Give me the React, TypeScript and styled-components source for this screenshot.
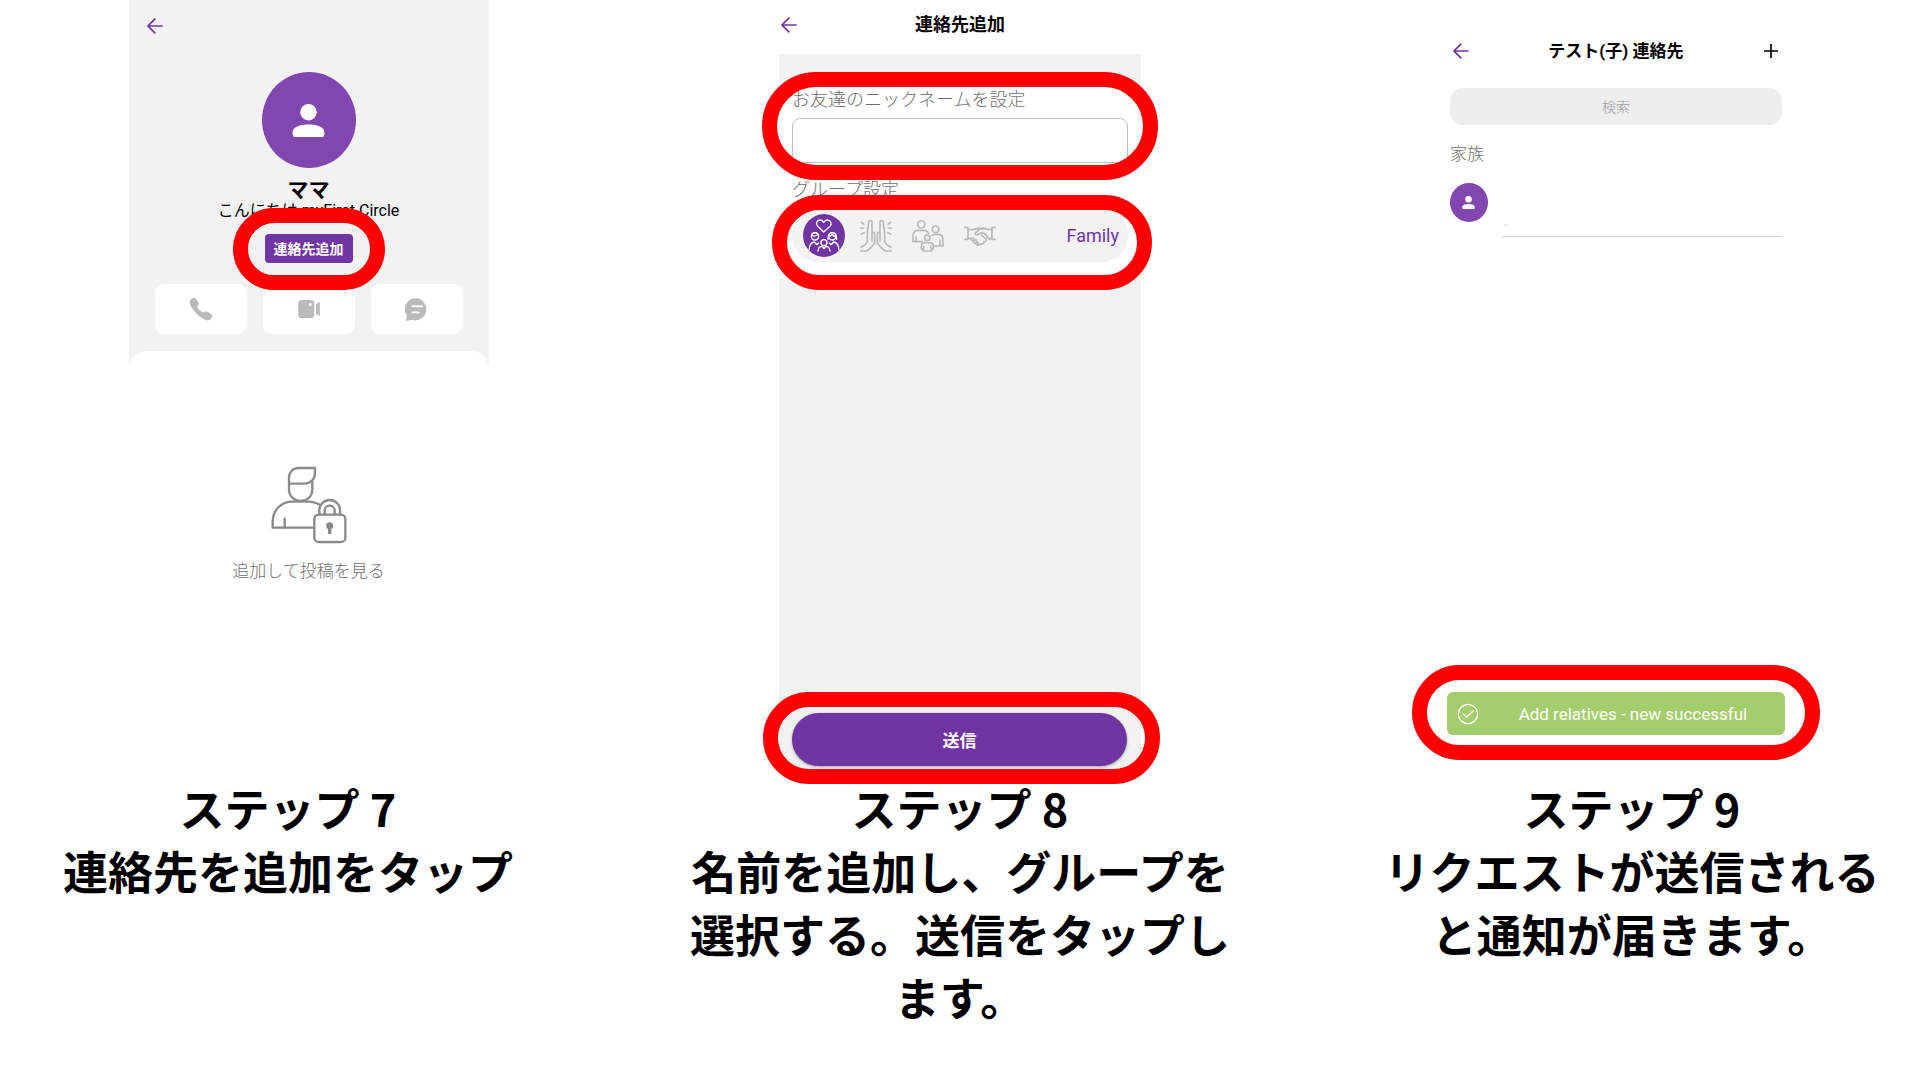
import React from 'react';
import styled, { createGlobalStyle } from 'styled-components';
import { IoCall } from 'react-icons/io5';

const purple = '#7035a3';
const avatarPurple = '#8247ae';
const panel = '#f2f2f2';
const muted = '#6e6e6e';
const iconGrey = '#bababa';

const GlobalStyle = createGlobalStyle`
  *, *::before, *::after { box-sizing: border-box; }
  body {
    margin: 0;
    background: #fff;
    color: #000;
    font-family: Roboto, 'Noto Sans CJK JP', sans-serif;
  }
  h1, h2, p { margin: 0; }
  button, input { font: inherit; }
  button { border: 0; padding: 0; background: none; cursor: pointer; }
  svg { display: block; }
`;

const Page = styled.main`
  min-height: 100vh;
  overflow-x: hidden;
`;

const ScreenRow = styled.div`
  display: grid;
  grid-template-columns: 9fr 10fr 9fr;
  justify-items: center;
  align-items: start;
`;

const Captions = styled.div`
  display: grid;
  grid-template-columns: 3fr 4fr 3fr;
  justify-items: center;
`;

const Caption = styled.section<{ $max: number }>`
  max-width: ${p => p.$max}px;
  font-family: 'Noto Sans CJK JP', sans-serif;
  font-size: 45px;
  line-height: 63px;
  font-weight: 700;
  text-align: center;
`;

const CaptionTitle = styled.h2`
  font-size: inherit;
  font-weight: inherit;
`;

const Ring = styled.span<{ $inset: string }>`
  position: absolute;
  inset: ${p => p.$inset};
  border: 15px solid #ff0000;
  border-radius: 54px;
  pointer-events: none;
  z-index: 2;
`;

const Marked = styled.div`
  position: relative;
`;

/* Profile screen */

const Profile = styled.section`
  width: 360px;
  min-height: 776px;
  display: flex;
  flex-direction: column;
`;

const ProfileTop = styled.div`
  display: flex;
  flex-direction: column;
  align-items: center;
  background: ${panel};
`;

const ProfileBar = styled.div`
  align-self: stretch;
  display: flex;
  align-items: flex-start;
  padding: 18px 18px 0;
  height: 72px;
`;

const Avatar = styled.div<{ $w: number; $h: number }>`
  display: flex;
  align-items: center;
  justify-content: center;
  width: ${p => p.$w}px;
  height: ${p => p.$h}px;
  border-radius: 50%;
  background: ${avatarPurple};
`;

const Name = styled.h1`
  margin-top: 10px;
  font-size: 21px;
  line-height: 24px;
  font-weight: 700;
`;

const Greeting = styled.p`
  font-size: 16px;
  line-height: 18px;
  font-weight: 400;
`;

const AddButton = styled.button`
  display: block;
  width: 88px;
  height: 29px;
  padding-top: 1px;
  border-radius: 4px;
  background: ${purple};
  color: #fff;
  font-size: 14px;
  line-height: 28px;
  font-weight: 700;
`;

const AddArea = styled(Marked)`
  margin-top: 14px;
`;

const Actions = styled.div`
  display: flex;
  gap: 16px;
  margin-top: 21px;
`;

const Action = styled.button`
  display: flex;
  align-items: center;
  justify-content: center;
  width: 92px;
  height: 50px;
  border-radius: 9px;
  background: #fff;
`;

const Sheet = styled.div`
  align-self: stretch;
  height: 22px;
  margin-top: 17px;
  border-radius: 18px 18px 0 0;
  background: #fff;
`;

const Locked = styled.div`
  display: flex;
  flex-direction: column;
  align-items: center;
  padding-top: 93px;
`;

const LockedText = styled.p`
  margin-top: 15px;
  color: ${muted};
  font-size: 17px;
  line-height: 24px;
  font-weight: 300;
`;

/* Add contact screen */

const AddContact = styled.section`
  width: 362px;
  min-height: 770px;
  display: flex;
  flex-direction: column;
`;

const TitleBar = styled.header<{ $h: number; $pad?: number }>`
  display: grid;
  grid-template-columns: 20px 1fr 20px;
  align-items: center;
  height: ${p => p.$h}px;
  padding: 0 ${p => p.$pad ?? 0}px;
`;

const ContactTitleBar = styled(TitleBar)`
  padding-bottom: 4px;
`;

const Title = styled.h1<{ $size: number }>`
  font-size: ${p => p.$size}px;
  line-height: 24px;
  font-weight: 700;
  text-align: center;
`;

const IconButton = styled.button`
  display: flex;
  align-items: center;
  justify-content: center;
  justify-self: center;
`;

const ContactBody = styled.form`
  flex: 1;
  display: flex;
  flex-direction: column;
  padding-top: 26px;
  background: ${panel};
`;

const Fields = styled.div`
  padding: 8px 13px 16px;
  background: #fff;
`;

const FieldLabel = styled.label`
  display: block;
  color: ${muted};
  font-size: 18px;
  line-height: 24px;
  font-weight: 300;
`;

const NameInput = styled.input`
  display: block;
  width: 100%;
  height: 45px;
  margin-top: 6px;
  padding: 0 12px;
  border: 1px solid #bfbfbf;
  border-radius: 8px;
  background: #fff;
  outline: none;
`;

const GroupLabel = styled.p`
  margin-top: 15px;
  color: ${muted};
  font-size: 18px;
  line-height: 24px;
  font-weight: 300;
`;

const GroupBar = styled.div`
  display: flex;
  align-items: center;
  height: 53px;
  margin-top: 7px;
  padding: 0 9px 0 6px;
  border-radius: 26px;
  background: ${panel};
`;

const GroupOption = styled.label`
  display: flex;
  justify-content: center;
  width: 52px;
  cursor: pointer;
`;

const HiddenRadio = styled.input`
  appearance: none;
  width: 0;
  height: 0;
  margin: 0;
`;

const GroupName = styled.span`
  margin-left: auto;
  color: ${purple};
  font-size: 18px;
  line-height: 24px;
`;

const SendArea = styled(Marked)`
  margin: auto 14px 4px 13px;
`;

const SendButton = styled.button`
  display: block;
  width: 100%;
  height: 53px;
  border-radius: 27px;
  background: ${purple};
  box-shadow: 0 1px 3px rgba(0, 0, 0, 0.35);
  color: #fff;
  font-size: 17px;
  font-weight: 700;
`;

/* Contact list screen */

const ContactList = styled.section`
  width: 338px;
  min-height: 735px;
  margin-left: 9px;
  padding-top: 38px;
  display: flex;
  flex-direction: column;
`;

const ListBody = styled.div`
  padding: 0 3px;
`;

const Search = styled.input`
  display: block;
  width: 100%;
  height: 37px;
  margin-top: 24px;
  border: 0;
  border-radius: 13px;
  background: #eeeeee;
  font-size: 14px;
  font-weight: 300;
  text-align: center;
  outline: none;
  &::placeholder { color: #9c9c9c; opacity: 1; }
`;

const GroupHeading = styled.h2`
  margin-top: 17px;
  color: ${muted};
  font-size: 17px;
  line-height: 24px;
  font-weight: 300;
`;

const ContactRow = styled.div`
  display: flex;
  gap: 14px;
  margin-top: 17px;
`;

const ContactDetail = styled.div`
  flex: 1;
  height: 54px;
  padding: 40px 0 0 2px;
  border-bottom: 1px solid #cfcfcf;
`;

const Toast = styled.div`
  display: flex;
  align-items: center;
  height: 43px;
  padding: 0 12px 0 10px;
  border-radius: 6px;
  background: #a4cd6e;
  color: #fff;
  font-size: 17px;
  line-height: 24px;
`;

const ToastText = styled.span`
  flex: 1;
  padding-left: 14px;
  text-align: center;
`;

const ToastArea = styled(Marked)`
  margin-top: auto;
`;

const BackIcon = () => (
  <svg width="16" height="16" viewBox="0 0 48 48" fill="none" stroke={purple} strokeWidth="5">
    <path d="M47 24H4M25 2L3 24l22 22" />
  </svg>
);

const PlusIcon = () => (
  <svg width="14" height="14" viewBox="0 0 42 42" stroke="#000" strokeWidth="5">
    <path d="M21 0v42M0 21h42" />
  </svg>
);

const PersonIcon = ({ size }: { size: number }) => (
  <svg width={size} height={size} viewBox="545 311 100 100" fill="#fff">
    <circle cx="595" cy="336" r="25" />
    <path d="M547 396c0-15 22-23 48-23s48 8 48 23v8q0 7-7 7h-82q-7 0-7-7z" />
  </svg>
);

const VideoIcon = () => (
  <svg width="22" height="18" viewBox="561 899 66 55">
    <rect x="561" y="899" width="49" height="55" rx="11" fill={iconGrey} />
    <circle cx="598" cy="913" r="5" fill="#fff" />
    <path d="M615 915q0-3 3-5l6-4q3-2 3 2v37q0 4-3 2l-6-4q-3-2-3-5z" fill={iconGrey} />
  </svg>
);

const ChatIcon = () => (
  <svg width="23" height="23" viewBox="883 891 70 72">
    <path
      d="M918 892a34 34 0 1 1-8 69c-4-1-7-1-11 0l-11 1c-4 0-5-2-3-5 3-6 4-8 2-13a34 34 0 0 1 31-52z"
      fill={iconGrey}
    />
    <path d="M905 917h31M905 936h20" stroke="#fff" strokeWidth="6" strokeLinecap="round" />
  </svg>
);

const LockedPersonIcon = () => (
  <svg
    width="76"
    height="78"
    viewBox="151 77 228 234"
    fill="none"
    stroke="#8a8a8a"
    strokeWidth="7"
    strokeLinejoin="round"
    strokeLinecap="round"
  >
    <path d="M205 130v-18c0-17 12-29 29-29h49v14c0 19-13 33-32 33h-46v17c0 21 15 35 35 35s35-14 35-35v-24" />
    <path d="M279 262H156v-16c0-38 26-62 60-62h48c13 0 22 3 31 8" />
    <path d="M192 235v27" />
    <rect x="281" y="223" width="93" height="82" rx="13" />
    <path d="M296 222v-12a31 31 0 0 1 62 0v12M312 222v-11a15 15 0 0 1 30 0v11" />
    <circle cx="327" cy="256" r="7" fill="#8a8a8a" />
    <path d="M327 256v21" strokeWidth="10" />
  </svg>
);

const FamilyIcon = () => (
  <svg width="42" height="43" viewBox="39 28 126 129" fill="none" stroke="#fff" strokeWidth="4" strokeLinecap="round" strokeLinejoin="round">
    <ellipse cx="102" cy="92.500" rx="63" ry="64.500" fill={purple} stroke="none" />
    <path d="M101 82L83 65c-7-8-3-19 7-19 5 0 9 3 11 7 2-4 6-7 11-7 10 0 15 11 8 19z" />
    <circle cx="75" cy="95" r="11" />
    <path d="M65 93c6 2 14 1 18-4M65 90c5-8 15-8 20 0" />
    <circle cx="127" cy="95" r="11" />
    <path d="M117 95c5-1 8-3 10-6 2 4 5 6 10 7M114 104c0-12 2-20 13-20s13 8 13 20" />
    <path d="M57 136c1-15 7-23 16-24l8 8 5-5M147 136c-1-15-7-23-16-24l-8 8-5-5" />
    <circle cx="102" cy="114" r="9" />
    <path d="M84 139c1-9 6-14 13-14l5 7 5-7c7 0 12 5 13 14" />
  </svg>
);

const ClapIcon = () => (
  <svg width="32" height="32" viewBox="210 44 96 96" fill="none" stroke={iconGrey} strokeWidth="5" strokeLinecap="round" strokeLinejoin="round">
    <path d="M212 137h15c5 0 8-2 12-7l11-11c3-3 4-5 4-9V86c0-7-8-7-8 0v21M246 84V50c0-6-9-6-10 0l-4 34v23c0 5-2 7-6 11l-13 8" />
    <path d="M304 137h-15c-5 0-8-2-12-7l-11-11c-3-3-4-5-4-9V86c0-7 8-7 8 0v21M270 84V50c0-6 9-6 10 0l4 34v23c0 5 2 7 6 11l13 8" />
    <path d="M214 51l8 5M212 68h9M214 86l8-4M302 51l-8 5M304 68h-9M302 86l-8-4" />
  </svg>
);

const PeopleIcon = () => (
  <svg width="32" height="32" viewBox="368 44 96 96" fill="none" stroke={iconGrey} strokeWidth="5" strokeLinecap="round" strokeLinejoin="round">
    <circle cx="396" cy="57" r="11" />
    <circle cx="439" cy="72" r="10" />
    <circle cx="414" cy="97" r="8" />
    <path d="M398 109h-27V92c0-12 7-17 16-17h17c8 0 12 4 14 10M380 94v14" />
    <path d="M427 91c3-3 6-4 10-4h8c10 0 16 6 16 16v19h-26M452 104v17" />
    <path d="M396 131v-8c0-7 5-11 11-11h14c7 0 11 4 11 11v8h-5v6h-26v-6zM403 123v8M425 123v8" />
  </svg>
);

const HandshakeIcon = () => (
  <svg width="32" height="20" viewBox="524 63 97 61" fill="none" stroke={iconGrey} strokeWidth="5" strokeLinecap="round" strokeLinejoin="round">
    <path d="M526 68h10v36h-10M619 68h-10v36h10" />
    <path d="M536 73c10 3 17 2 27-2l8-2 10 3M609 73c-10 2-16 0-23-3-5-2-9-1-13 2l-14 11c-4 4 2 9 7 6l10-5c9-1 15 5 19 13l5 6 9-3" />
    <path d="M536 100l7 1 10 11M545 103c5-6 12-3 9 4 6-4 11 0 7 7 6-2 10 3 5 7l-13-9" />
    <path d="M566 120c5 3 9 1 9-3 5 2 10-1 9-6 6 0 9-3 7-8l-13-12" />
  </svg>
);

const CheckIcon = () => (
  <svg width="22" height="22" viewBox="0 0 66 66" fill="none" stroke="#fff" strokeWidth="4" strokeLinecap="round" strokeLinejoin="round">
    <circle cx="33" cy="33" r="29" />
    <path d="M20 34l9 9 20-20" />
  </svg>
);

const groups = [
  { id: 'family', label: 'Family', Icon: FamilyIcon },
  { id: 'friends', label: 'Friends', Icon: ClapIcon },
  { id: 'relatives', label: 'Relatives', Icon: PeopleIcon },
  { id: 'others', label: 'Others', Icon: HandshakeIcon },
];

export default function App() {
  return (
    <Page lang="ja">
      <GlobalStyle />
      <ScreenRow>
        <Profile>
          <ProfileTop>
            <ProfileBar>
              <IconButton aria-label="戻る"><BackIcon /></IconButton>
            </ProfileBar>
            <Avatar $w={94} $h={96}><PersonIcon size={33} /></Avatar>
            <Name>ママ</Name>
            <Greeting>こんにちは myFirst Circle</Greeting>
            <AddArea>
              <AddButton>連絡先追加</AddButton>
              <Ring $inset="-26px -32px -27px" />
            </AddArea>
            <Actions>
              <Action aria-label="通話"><IoCall size={26} color={iconGrey} /></Action>
              <Action aria-label="ビデオ"><VideoIcon /></Action>
              <Action aria-label="メッセージ"><ChatIcon /></Action>
            </Actions>
            <Sheet />
          </ProfileTop>
          <Locked>
            <LockedPersonIcon />
            <LockedText>追加して投稿を見る</LockedText>
          </Locked>
        </Profile>

        <AddContact>
          <ContactTitleBar $h={54}>
            <IconButton aria-label="戻る"><BackIcon /></IconButton>
            <Title $size={18}>連絡先追加</Title>
          </ContactTitleBar>
          <ContactBody onSubmit={e => e.preventDefault()}>
            <Fields>
              <Marked>
                <FieldLabel htmlFor="nickname">お友達のニックネームを設定</FieldLabel>
                <NameInput id="nickname" type="text" />
                <Ring $inset="-16px -30px -17px" />
              </Marked>
              <GroupLabel id="group-label">グループ設定</GroupLabel>
              <Marked>
                <GroupBar role="radiogroup" aria-labelledby="group-label">
                  {groups.map(({ id, label, Icon }, i) => (
                    <GroupOption key={id} htmlFor={id}>
                      <HiddenRadio id={id} type="radio" name="group" aria-label={label} defaultChecked={i === 0} />
                      <Icon />
                    </GroupOption>
                  ))}
                  <GroupName>Family</GroupName>
                </GroupBar>
                <Ring $inset="-14px -24px -28px -20px" />
              </Marked>
            </Fields>
            <SendArea>
              <SendButton type="submit">送信</SendButton>
              <Ring $inset="-21px -33px -18px -29px" />
            </SendArea>
          </ContactBody>
        </AddContact>

        <ContactList>
          <ListBody>
            <TitleBar $h={26} $pad={1}>
              <IconButton aria-label="戻る"><BackIcon /></IconButton>
              <Title $size={17}>テスト(子) 連絡先</Title>
              <IconButton aria-label="追加"><PlusIcon /></IconButton>
            </TitleBar>
            <Search type="text" placeholder="検索" aria-label="検索" />
            <GroupHeading>家族</GroupHeading>
            <ContactRow>
              <Avatar $w={38} $h={39}><PersonIcon size={13} /></Avatar>
              <ContactDetail>
                <svg width="5" height="4" viewBox="0 0 5 4" stroke="#d0d0d0"><path d="M0 1l4 2" /></svg>
              </ContactDetail>
            </ContactRow>
          </ListBody>
          <ToastArea role="status">
            <Toast>
              <CheckIcon />
              <ToastText>Add relatives - new successful</ToastText>
            </Toast>
            <Ring $inset="-27px -35px -25px" />
          </ToastArea>
        </ContactList>
      </ScreenRow>

      <Captions>
        <Caption $max={560}>
          <CaptionTitle>ステップ 7</CaptionTitle>
          <p>連絡先を追加をタップ</p>
        </Caption>
        <Caption $max={568}>
          <CaptionTitle>ステップ 8</CaptionTitle>
          <p>名前を追加し、グループを選択する。送信をタップします。</p>
        </Caption>
        <Caption $max={528}>
          <CaptionTitle>ステップ 9</CaptionTitle>
          <p>リクエストが送信されると通知が届きます。</p>
        </Caption>
      </Captions>
    </Page>
  );
}
